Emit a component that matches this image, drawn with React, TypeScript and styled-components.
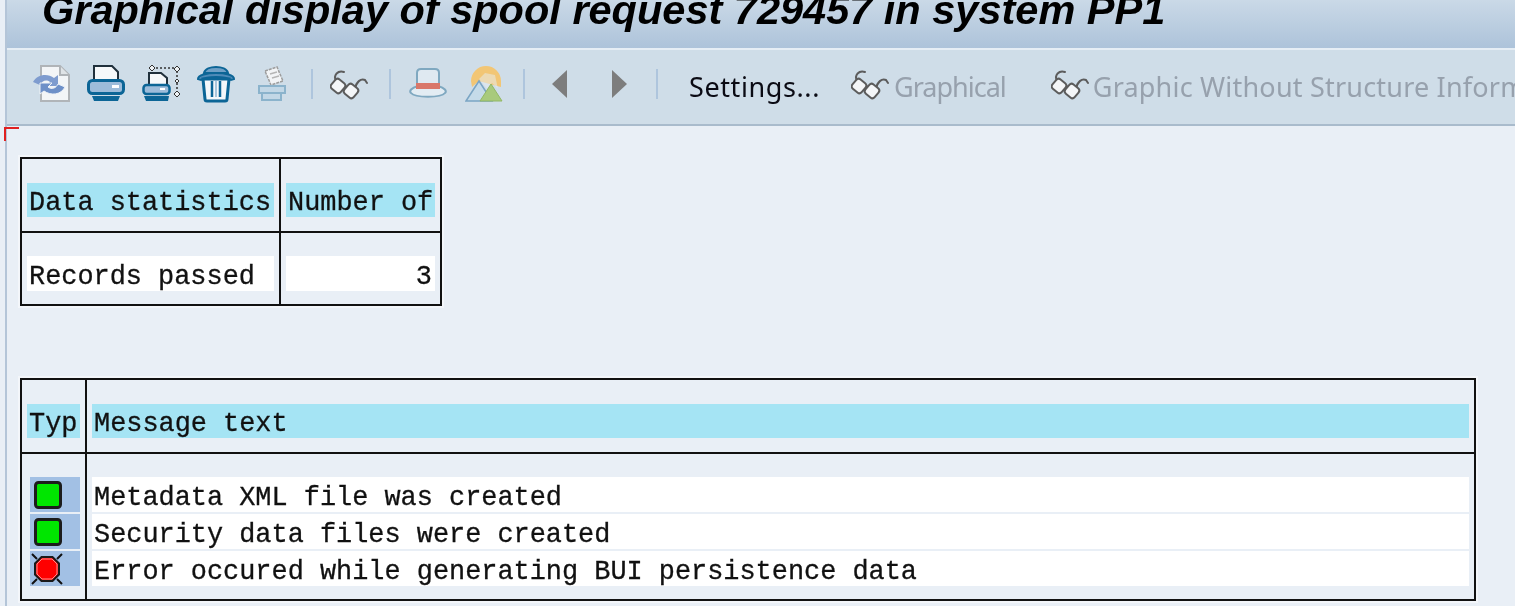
import { createGlobalStyle, styled } from "styled-components"

const GlobalStyle = createGlobalStyle`
    html, body {
        margin: 0;
        padding: 0;
        height: 100%;
        overflow: hidden;
        background-color: #e9eff6;
    }
`

const Page = styled.div`
    width: 1515px;
    height: 606px;
    display: flex;
    overflow: hidden;
    background-color: #e9eff6;
    filter: blur(0.6px);
`

const Edge = styled.div`
    width: 7px;
    flex-shrink: 0;
    border-right: 2px solid #b4c5d8;
    box-sizing: border-box;
`

const Main = styled.div`
    flex: 1;
    min-width: 0;
    display: flex;
    flex-direction: column;
    position: relative;
`

const TitleBar = styled.div`
    height: 48px;
    flex-shrink: 0;
    overflow: hidden;
    display: flex;
    align-items: flex-end;
    padding: 0 0 20px 35px;
    box-sizing: border-box;
    background: linear-gradient(#cad9e7, #adc3da);
`

const Title = styled.h1`
    margin: 0;
    font: italic bold 41.5px/37px "Liberation Sans", Arial, sans-serif;
    color: #000;
    white-space: nowrap;
`

const Toolbar = styled.div`
    height: 78px;
    flex-shrink: 0;
    box-sizing: border-box;
    display: flex;
    align-items: center;
    padding: 0 0 6px 25px;
    background-color: #cfdde8;
    border-top: 2px solid #e6eef5;
    border-bottom: 2px solid #a9bbcc;
    overflow: hidden;
`

const Tool = styled.span<{ $ml?: number }>`
    display: flex;
    align-items: center;
    flex-shrink: 0;
    margin-left: ${(p) => p.$ml ?? 0}px;
    svg {
        display: block;
    }
`

const Separator = styled.span<{ $ml: number }>`
    width: 2px;
    height: 30px;
    flex-shrink: 0;
    margin-left: ${(p) => p.$ml}px;
    background-color: #aec5dd;
`

const ToolText = styled.span<{ $off?: boolean; $ml?: number; $sp: number }>`
    font: 27px/36px "Noto Sans", Tahoma, sans-serif;
    letter-spacing: ${(p) => p.$sp}px;
    white-space: nowrap;
    flex-shrink: 0;
    margin-top: 6px;
    margin-left: ${(p) => p.$ml ?? 0}px;
    color: ${(p) => (p.$off ? "#97a1ad" : "#0b0b14")};
`

const Content = styled.div`
    flex: 1;
    padding: 31px 0 0 13px;
`

const CursorMark = styled.span`
    position: absolute;
    left: -3px;
    top: 127px;
    width: 13px;
    height: 12px;
    border-top: 2px solid #e02020;
    border-left: 2px solid #e02020;
`

const Table = styled.table<{ $w: number }>`
    width: ${(p) => p.$w}px;
    table-layout: fixed;
    border-collapse: collapse;
    font: 26.9px/30px "Liberation Mono", "Courier New", monospace;
    -webkit-text-stroke: 0.3px #111;
    color: #111;
    outline: 2px solid #f3f6fa;
    & + & {
        margin-top: 72px;
    }
    th, td {
        padding: 0 5px;
        border: 2px solid #111;
        border-top: 0;
        border-bottom: 0;
    }
    thead th {
        padding-top: 24px;
        padding-bottom: 14px;
        border-top: 2px solid #111;
        border-bottom: 2px solid #111;
        font-weight: normal;
        text-align: left;
    }
    tbody td {
        padding-top: 1px;
        padding-bottom: 1px;
    }
    tbody tr:first-child td {
        padding-top: 23px;
    }
    tbody tr:last-child td {
        padding-bottom: 13px;
        border-bottom: 2px solid #111;
    }
`

const Bar = styled.div<{ $kind: "head" | "cell" | "type"; $right?: boolean }>`
    height: ${(p) => (p.$kind === "head" ? 34 : 35)}px;
    box-sizing: border-box;
    padding: ${(p) => (p.$kind === "type" ? "0 2px" : "6px 3px 0 2px")};
    display: flex;
    align-items: center;
    justify-content: ${(p) => (p.$right ? "flex-end" : "flex-start")};
    white-space: nowrap;
    overflow: hidden;
    margin-left: ${(p) => (p.$kind === "type" ? 3 : 0)}px;
    background-color: ${(p) =>
        p.$kind === "head" ? "#a5e4f4" : p.$kind === "type" ? "#a2c0e4" : "#ffffff"};
`

const Light = styled.svg<{ $ml: number }>`
    display: block;
    flex-shrink: 0;
    margin-left: ${(p) => p.$ml}px;
`

function Glasses() {
  return (
    <svg width="38" height="38" viewBox="0 0 38 38" fill="none">
      <g stroke="#5c5c5c" strokeWidth="2" strokeLinecap="round">
        <path d="M6 16 C3 10 8 5 14 7" />
        <path d="M15 21 L17 22" />
        <path d="M25 24 C26 17 31 13 35 15 L37 18" />
        <rect x="2" y="15" width="12" height="12" rx="3" transform="rotate(40 8 21)" fill="#f4f6f8" />
        <rect x="15" y="20" width="12" height="12" rx="3" transform="rotate(40 21 26)" fill="#f4f6f8" />
      </g>
    </svg>
  )
}

function RefreshDoc() {
  return (
    <svg width="38" height="38" viewBox="0 0 38 38">
      <path d="M9 1 H28 L37 10 V36 H9 Z" fill="#f3f5f7" stroke="#b0b4b8" strokeWidth="2" />
      <path d="M28 1 V10 H37" fill="#dfe3e6" stroke="#b0b4b8" strokeWidth="2" />
      <path d="M1 17 C5 9 16 8 22 13 L26 10 V21 H14 L18 17 C14 14 10 16 8 20 Z" fill="#7f9ccf" />
      <path d="M33 22 C29 30 19 31 12 26 L8 29 V18 H20 L16 22 C20 25 24 23 26 19 Z" fill="#6e90c8" stroke="#eef2f7" strokeWidth="1" />
    </svg>
  )
}

function Printer() {
  return (
    <svg width="38" height="38" viewBox="0 0 38 38">
      <path d="M7 15 V1 H25 L31 7 V15 Z" fill="#f6f8fa" stroke="#20303c" strokeWidth="2" />
      <rect x="1.5" y="15.5" width="35" height="13" rx="4" fill="#9dbcda" stroke="#0c6596" strokeWidth="3" />
      <rect x="25" y="20" width="7" height="3" fill="#fff" />
      <path d="M5 31 H33 L31 36 H7 Z" fill="#0c6596" />
    </svg>
  )
}

function PrintArea() {
  return (
    <svg width="38" height="38" viewBox="0 0 38 38">
      <path d="M7 20 V8 H19 L25 13 V20 Z" fill="#f6f8fa" stroke="#20303c" strokeWidth="2" />
      <rect x="1.5" y="20" width="26" height="9" rx="3" fill="#9dbcda" stroke="#0c6596" strokeWidth="2.5" />
      <rect x="18" y="23" width="5" height="2" fill="#fff" />
      <path d="M2 31 H27 L26 36 H4 Z" fill="#0c6596" />
      <path d="M10 3 H35 V29" stroke="#333" strokeWidth="1.5" strokeDasharray="2 2" fill="none" />
      <path d="M10 0 L13 3 L10 6 L7 3 Z M35 1 L38 4 L35 7 L32 4 Z M35 26 L38 29 L35 32 L32 29 Z M35 14 L37 16 L35 18 L33 16 Z" fill="#eef2f5" stroke="#333" strokeWidth="1" />
    </svg>
  )
}

function Trash() {
  return (
    <svg width="38" height="38" viewBox="0 0 38 38">
      <path d="M7 8 C9 0 29 0 31 8 Z" fill="#6fa0c6" stroke="#0c6596" strokeWidth="2" />
      <path d="M1 14 C1 6 37 6 37 14 L34 15 C28 11 10 11 4 15 Z" fill="#4f8bb8" stroke="#0c6596" strokeWidth="2" />
      <path d="M6 14 H32 L30 34 Q30 36 28 36 H10 Q8 36 8 34 Z" fill="#f4f7fa" stroke="#0c6596" strokeWidth="3" />
      <path d="M15 16 V32 M23 16 V32" stroke="#0c6596" strokeWidth="2.5" />
      <path d="M19 16 V32" stroke="#a9c6dd" strokeWidth="2" />
    </svg>
  )
}

function FadedTray() {
  return (
    <svg width="38" height="38" viewBox="0 0 38 38">
      <path d="M13 6 L25 2 L31 16 L19 20 Z" fill="#f2f4f6" stroke="#9c9c9c" strokeWidth="1.5" strokeDasharray="3 1" />
      <path d="M18 9 L25 7 M20 13 L27 11" stroke="#b5b5b5" strokeWidth="1.5" />
      <path d="M10 28 H29 V35 H10 Z" fill="#c2d7e6" stroke="#8bb3cc" strokeWidth="2" />
      <rect x="7" y="21" width="26" height="7" fill="#c2d7e6" stroke="#8bb3cc" strokeWidth="2" />
    </svg>
  )
}

function Hat() {
  return (
    <svg width="38" height="38" viewBox="0 0 38 38">
      <path d="M8 20 V8 Q8 4 12 4 H26 Q30 4 30 8 V20 Z" fill="#dfe9f1" stroke="#7fa8c0" strokeWidth="2" />
      <path d="M9 21 C2 23 0 26 2 28 C6 33 32 33 36 28 C38 26 36 23 29 21 Z" fill="#e3ecf3" stroke="#7fa8c0" strokeWidth="2" />
      <rect x="7" y="18" width="24" height="6" fill="#d9776a" />
    </svg>
  )
}

function Landscape() {
  return (
    <svg width="38" height="38" viewBox="0 0 38 38">
      <path d="M6 16 A15 15 0 0 1 36 16 L36 22 L28 20 L14 16 L7 22 Z" fill="#f2c675" />
      <path d="M14 14 L22 24 L27 18 L33 24 L30 10 L20 8 Z" fill="#e6eef3" opacity="0.5" />
      <path d="M1 36 L14 16 L27 36 Z" fill="#c5dbe9" stroke="#7ba5c4" strokeWidth="1.5" />
      <path d="M15 36 L26 19 L37 36 Z" fill="#a8ca7c" stroke="#92b865" strokeWidth="1" />
    </svg>
  )
}

function Arrow({ right }: { right?: boolean }) {
  return (
    <svg width="15" height="28" viewBox="0 0 15 28">
      <path d={right ? "M0 0 L15 14 L0 28 Z" : "M15 0 L0 14 L15 28 Z"} fill="#7d7d7d" />
    </svg>
  )
}

function GreenLight() {
  return (
    <Light $ml={2} width="28" height="28" viewBox="0 0 28 28">
      <rect x="1.5" y="1.5" width="25" height="25" rx="3" fill="#00e600" stroke="#1c1c1c" strokeWidth="3" />
    </Light>
  )
}

function RedLight() {
  return (
    <Light $ml={-1} width="32" height="32" viewBox="0 0 32 32">
      <path d="M1 1 L6 6 M31 1 L26 6 M1 31 L6 26 M31 31 L26 26" stroke="#111" strokeWidth="2" />
      <path d="M10.5 4 H21.5 L28 10.5 V21.5 L21.5 28 H10.5 L4 21.5 V10.5 Z" fill="#ff0000" stroke="#1a1a1a" strokeWidth="2" />
      <path d="M11 6 H21 L26 11 V21 L21 26 H11 L6 21 V11 Z" fill="none" stroke="#ff8f8f" strokeWidth="1" />
    </Light>
  )
}

const messages = [
  { ok: true, text: "Metadata XML file was created" },
  { ok: true, text: "Security data files were created" },
  { ok: false, text: "Error occured while generating BUI persistence data" },
]

function App() {
  return (
    <>
      <GlobalStyle />
      <Page>
        <Edge />
        <Main>
          <TitleBar>
            <Title>Graphical display of spool request 729457 in system PP1</Title>
          </TitleBar>
          <Toolbar>
            <Tool><RefreshDoc /></Tool>
            <Tool $ml={17}><Printer /></Tool>
            <Tool $ml={17}><PrintArea /></Tool>
            <Tool $ml={17}><Trash /></Tool>
            <Tool $ml={17}><FadedTray /></Tool>
            <Separator $ml={21} />
            <Tool $ml={17}><Glasses /></Tool>
            <Separator $ml={21} />
            <Tool $ml={18}><Hat /></Tool>
            <Tool $ml={18}><Landscape /></Tool>
            <Separator $ml={20} />
            <Tool $ml={27}><Arrow /></Tool>
            <Tool $ml={45}><Arrow right /></Tool>
            <Separator $ml={29} />
            <ToolText $ml={31} $sp={0.6}>Settings...</ToolText>
            <Tool $ml={31}><Glasses /></Tool>
            <ToolText $off $ml={5} $sp={-1}>Graphical</ToolText>
            <Tool $ml={45}><Glasses /></Tool>
            <ToolText $off $ml={4} $sp={0.2}>Graphic Without Structure Information</ToolText>
          </Toolbar>
          <Content>
            <CursorMark />
            <Table $w={420}>
              <colgroup>
                <col width="259" />
                <col width="161" />
              </colgroup>
              <thead>
                <tr>
                  <th><Bar $kind="head">Data statistics</Bar></th>
                  <th><Bar $kind="head">Number of</Bar></th>
                </tr>
              </thead>
              <tbody>
                <tr>
                  <td><Bar $kind="cell">Records passed</Bar></td>
                  <td><Bar $kind="cell" $right>3</Bar></td>
                </tr>
              </tbody>
            </Table>
            <Table $w={1454}>
              <colgroup>
                <col width="65" />
                <col width="1389" />
              </colgroup>
              <thead>
                <tr>
                  <th><Bar $kind="head">Typ</Bar></th>
                  <th><Bar $kind="head">Message text</Bar></th>
                </tr>
              </thead>
              <tbody>
                {messages.map((m) => (
                  <tr key={m.text}>
                    <td><Bar $kind="type">{m.ok ? <GreenLight /> : <RedLight />}</Bar></td>
                    <td><Bar $kind="cell">{m.text}</Bar></td>
                  </tr>
                ))}
              </tbody>
            </Table>
          </Content>
        </Main>
      </Page>
    </>
  )
}

export default App
